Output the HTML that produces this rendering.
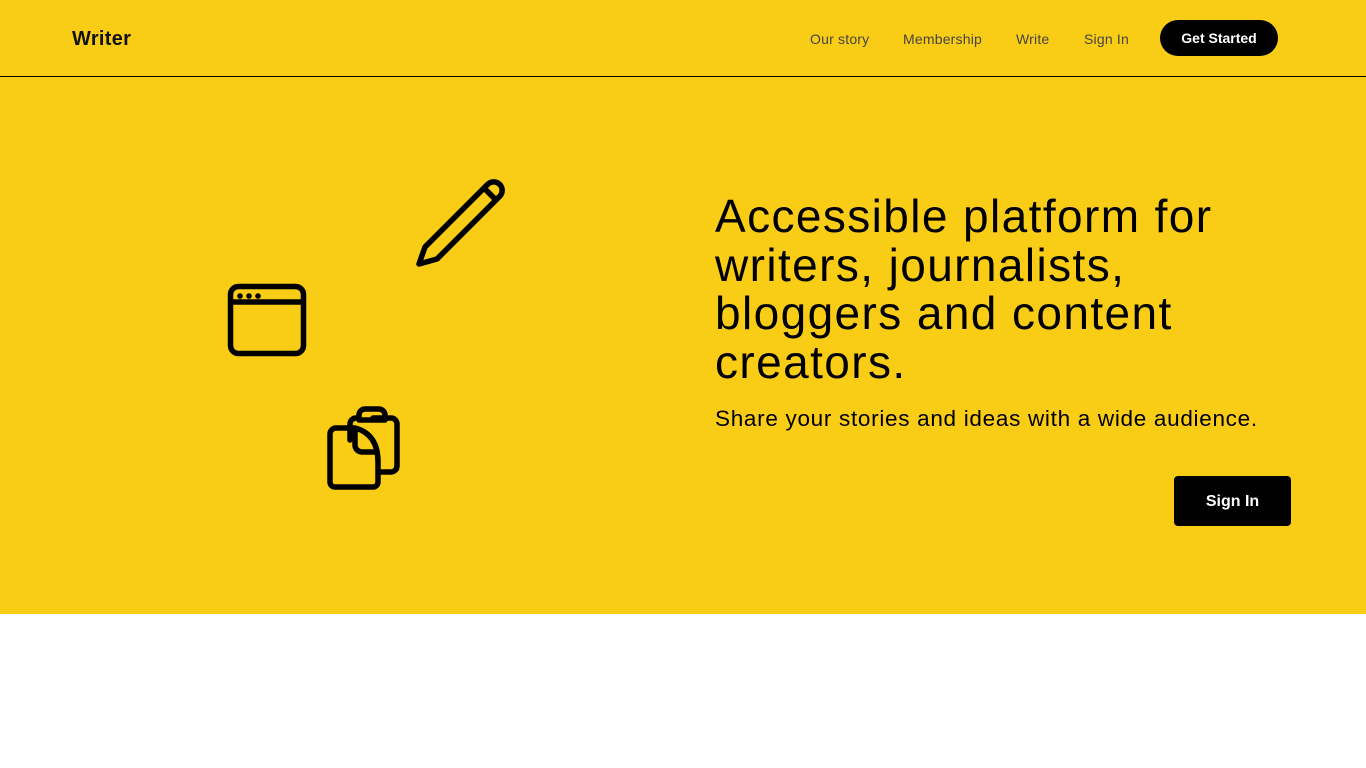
<!DOCTYPE html>
<html><head><style>
*{margin:0;padding:0;box-sizing:border-box}
body{width:1366px;height:768px;background:#fff;font-family:"Liberation Sans",sans-serif;position:relative;overflow:hidden}
.hero{position:absolute;left:0;top:0;width:1366px;height:614px;background:#f9cc16}
.hdr{position:absolute;left:0;top:0;width:1366px;height:77px;border-bottom:1px solid #000}
.logo{position:absolute;left:72px;top:28px;font-size:20px;font-weight:bold;color:#111;letter-spacing:0.3px}
.nav a{position:absolute;top:31px;font-size:14px;color:#444;text-decoration:none;letter-spacing:0.2px}
.gs{position:absolute;left:1160px;top:20px;width:118px;height:36px;border-radius:18px;background:#000;color:#fff;font-size:14px;font-weight:bold;text-align:center;line-height:37px}
h1{position:absolute;left:715px;top:192px;font-size:46px;font-weight:normal;line-height:48.5px;color:#000;width:600px;letter-spacing:1.4px}
.sub{position:absolute;left:715px;top:406px;font-size:22.5px;color:#000;letter-spacing:0.7px}
.si{position:absolute;left:1174px;top:476px;width:117px;height:50px;border-radius:4px;background:#000;color:#fff;font-size:16px;font-weight:bold;text-align:center;line-height:52px}
svg{position:absolute;left:0;top:0}
</style></head><body>
<div class="hero"></div>
<div class="hdr"></div>
<div class="logo">Writer</div>
<div class="nav"><a style="left:810px">Our story</a><a style="left:903px">Membership</a><a style="left:1016px">Write</a><a style="left:1084px">Sign In</a></div>
<div class="gs">Get Started</div>
<svg width="1366" height="614" fill="none" stroke="#000" stroke-width="5.5" stroke-linejoin="round" stroke-linecap="round">
<path d="M419,264 L425,247 L488,184 a8.5,8.5 0 0 1 12,12 L437,259 Z"/>
<path d="M485,189 L495,199"/>
<rect x="230.5" y="286.5" width="73" height="67" rx="8"/>
<path d="M231,302 H303"/>
<circle cx="240" cy="296" r="2.8" fill="#000" stroke="none"/>
<circle cx="249" cy="296" r="2.8" fill="#000" stroke="none"/>
<circle cx="258" cy="296" r="2.8" fill="#000" stroke="none"/>
<path d="M373,418 H391 a6,6 0 0 1 6,6 V466 a6,6 0 0 1 -6,6 H379"/>
<path d="M350,440 V424 a6,6 0 0 1 6,-6 H359"/>
<path d="M359,420 V415 a6,6 0 0 1 6,-6 H379 a6,6 0 0 1 6,6 V420 Z"/>
<path d="M336,428 H355 Q378,434 378,462 V482 a5,5 0 0 1 -5,5 H335 a5,5 0 0 1 -5,-5 V434 a6,6 0 0 1 6,-6 Z"/>
<path d="M355,429 V445 a7,7 0 0 0 7,7 H375"/>
</svg>
<h1>Accessible platform for writers, journalists, bloggers and content creators.</h1>
<div class="sub">Share your stories and ideas with a wide audience.</div>
<div class="si">Sign In</div>
</body></html>
